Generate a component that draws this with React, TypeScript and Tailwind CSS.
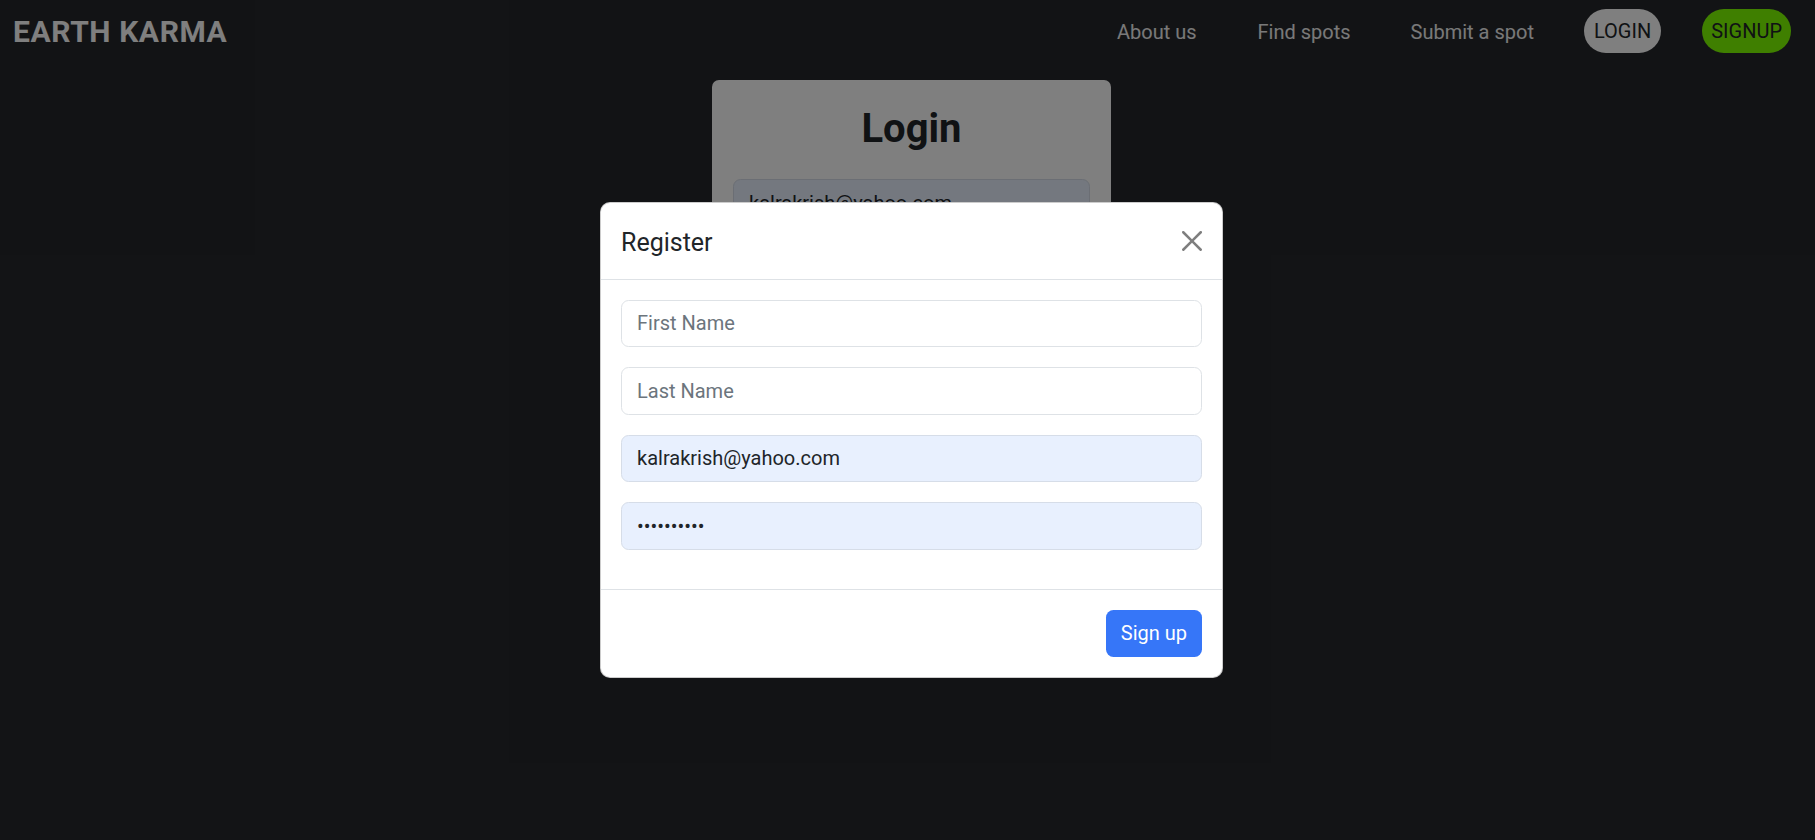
import React from 'react';

const NavLink: React.FC<{ label: string; className?: string }> = ({ label, className = '' }) => (
  <a href="#" className={`pt-[2px] text-[20px] leading-[30px] text-[#f2f2f2] no-underline ${className}`}>
    {label}
  </a>
);

const Field: React.FC<{ placeholder?: string; value?: string; type?: string; filled?: boolean }> = ({
  placeholder,
  value,
  type = 'text',
  filled,
}) => (
  <input
    type={type}
    placeholder={placeholder}
    defaultValue={value}
    readOnly
    className={`block w-full h-[47.5px] px-[15px] text-[20px] leading-[30px] text-[#212529] placeholder:text-[#6c757d] border rounded-[7.5px] outline-none ${
      filled ? 'bg-[#e8f0fe] border-[#d6dde8]' : 'bg-white border-[#dee2e6]'
    }`}
  />
);

export default function App() {
  return (
    <div className="relative w-full h-[840px] overflow-hidden bg-[#25272b] font-['Roboto',sans-serif]">
      {/* Navbar */}
      <nav className="flex items-center h-[62px] pl-[13px] pr-[24px]">
        <span className="pt-[2px] text-[30px] font-bold leading-none tracking-[0.6px] text-white">EARTH KARMA</span>
        <div className="ml-auto flex items-center">
          <NavLink label="About us" className="ml-0" />
          <NavLink label="Find spots" className="ml-[61px]" />
          <NavLink label="Submit a spot" className="ml-[60px]" />
          <button className="ml-[50px] h-[44px] px-[10px] rounded-full bg-white text-[20px] text-[#212529]">
            LOGIN
          </button>
          <button className="ml-[41px] h-[44px] px-[9px] rounded-full bg-[#7fff00] text-[20px] text-[#212529]">
            SIGNUP
          </button>
        </div>
      </nav>

      {/* Login card behind the modal */}
      <main className="flex justify-center pl-[8px]">
        <div className="mt-[18px] w-[399px] bg-white rounded-[7px] px-[21px] pt-[25px] pb-[24px]">
          <h2 className="text-[40px] font-bold leading-[48px] text-center text-[#212529]">Login</h2>
          <div className="mt-[26px] flex flex-col gap-[20px]">
            <Field value="kalrakrish@yahoo.com" filled />
            <Field type="password" value="password12" filled />
            <button className="h-[47.5px] rounded-[7.5px] bg-[#0d6efd] text-white text-[20px]">Login</button>
          </div>
        </div>
      </main>

      {/* Backdrop */}
      <div className="absolute inset-0 bg-black/50" />

      {/* Register modal */}
      <div className="absolute left-[600px] top-[202px] w-[623px] bg-white rounded-[10px] border border-black/20 text-[#212529]">
        <div className="flex items-center justify-between px-[20px] py-[19px] border-b border-[#dee2e6]">
          <h5 className="pt-[2px] -mb-[2px] text-[25px] font-normal leading-[37.5px]">Register</h5>
          <button className="w-[20px] h-[20px] opacity-50" aria-label="Close">
            <svg viewBox="0 0 16 16" width="20" height="20" fill="#000">
              <path d="M.293.293a1 1 0 0 1 1.414 0L8 6.586 14.293.293a1 1 0 1 1 1.414 1.414L9.414 8l6.293 6.293a1 1 0 0 1-1.414 1.414L8 9.414l-6.293 6.293a1 1 0 0 1-1.414-1.414L6.586 8 .293 1.707a1 1 0 0 1 0-1.414z" />
            </svg>
          </button>
        </div>
        <div className="px-[20px] pt-[20px] pb-[39px] flex flex-col gap-[20px]">
          <Field placeholder="First Name" />
          <Field placeholder="Last Name" />
          <Field value="kalrakrish@yahoo.com" filled />
          <Field type="password" value="password12" filled />
        </div>
        <div className="flex justify-end p-[15px] border-t border-[#dee2e6]">
          <button className="m-[5px] h-[47.5px] px-[15px] rounded-[7.5px] bg-[#3676f8] text-white text-[20px]">
            Sign up
          </button>
        </div>
      </div>
    </div>
  );
}
